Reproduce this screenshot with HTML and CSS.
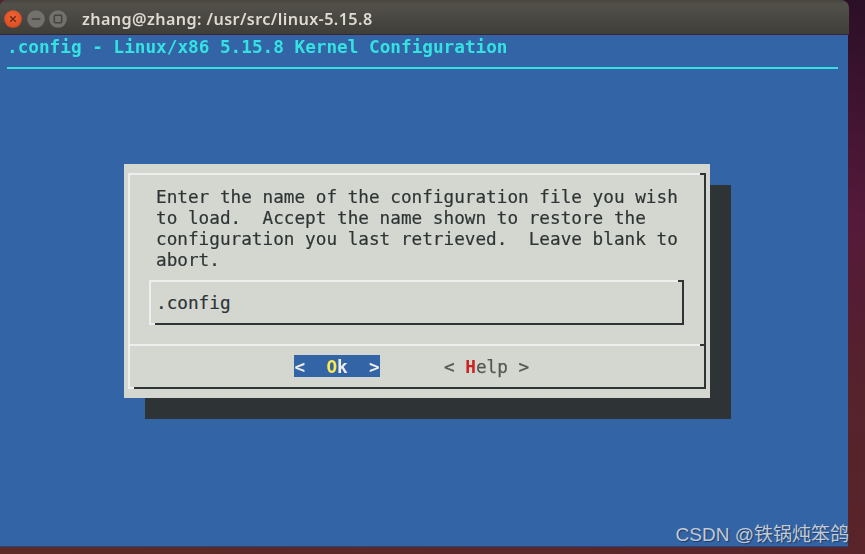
FILE: index.html
```html
<!DOCTYPE html>
<html lang="en">
<head>
<meta charset="utf-8">
<title>Kernel Configuration</title>
<link rel="stylesheet" href="styles.css">
</head>
<body>
<div class="desktop">
  <div class="window">
    <header class="titlebar">
      <div class="controls">
        <svg class="ctl" width="18" height="18" viewBox="0 0 18 18"><defs><radialGradient id="c" cx="50%" cy="40%" r="60%"><stop offset="0" stop-color="#f0693a"/><stop offset="1" stop-color="#dc4a1f"/></radialGradient></defs><circle cx="9" cy="9" r="8.8" fill="url(#c)"/><path d="M6.2 6.2l5.6 5.6M11.8 6.2l-5.6 5.6" stroke="#6e2a16" stroke-width="1.5" fill="none"/></svg>
        <svg class="ctl" width="18" height="18" viewBox="0 0 18 18"><circle cx="9" cy="9" r="8.8" fill="#72716b"/><path d="M4.8 9h8.4" stroke="#44433e" stroke-width="1.6" fill="none"/></svg>
        <svg class="ctl" width="18" height="18" viewBox="0 0 18 18"><circle cx="9" cy="9" r="8.8" fill="#72716b"/><rect x="5.3" y="5.3" width="7.4" height="7.4" rx="1" stroke="#44433e" stroke-width="1.5" fill="none"/></svg>
      </div>
      <h1 class="title">zhang@zhang: /usr/src/linux-5.15.8</h1>
    </header>
    <main class="terminal">
      <div class="heading">.config - Linux/x86 5.15.8 Kernel Configuration</div>
      <div class="rule"></div>
      <section class="dialog">
        <div class="frame">
          <p class="prompt">Enter the name of the configuration file you wish
to load.  Accept the name shown to restore the
configuration you last retrieved.  Leave blank to
abort.</p>
          <div class="input">.config</div>
          <div class="buttons">
            <span class="btn btn-active">&lt;  <b class="hot-yellow">O</b>k  &gt;</span>
            <span class="btn">&lt; <b class="hot-red">H</b>elp &gt;</span>
          </div>
        </div>
      </section>
    </main>
  </div>
  <div class="watermark">CSDN @铁锅炖笨鸽</div>
</div>
</body>
</html>
```
FILE: styles.css
```css
* { box-sizing: border-box; }
html, body { margin: 0; padding: 0; }
body { width: 865px; height: 554px; overflow: hidden; }

.desktop {
  position: relative;
  width: 865px;
  height: 554px;
  background: linear-gradient(20deg, #5e2a26 0%, #56222c 55%, #55193a 75%, #2a0f26 100%);
}

.window { width: 849px; height: 547px; display: flex; flex-direction: column; }

.titlebar {
  height: 35px;
  flex: none;
  display: flex;
  align-items: center;
  padding: 3px 0 0 4px;
  background: linear-gradient(#47453f 0, #53504a 12%, #3f3e39 100%);
  border-radius: 6px 8px 0 0;
  border-bottom: 1px solid #3a2438;
}
.controls { display: flex; gap: 4.5px; }
.ctl { display: block; }
.title {
  margin: 0 0 0 15px;
  font: 600 16.2px/20px "Noto Sans", sans-serif;
  letter-spacing: 0.4px;
  color: #dfdbd2;
  white-space: pre;
  filter: blur(0.3px);
}

.terminal {
  flex: 1;
  margin-right: 1px;
  padding: 2px 10px 0 7px;
  background: #3364a6;
  box-shadow: inset 0 -1px 0 #24467e;
  font-family: "DejaVu Sans Mono", monospace;
  font-size: 17.7px;
  line-height: 21.3px;
}
.heading {
  height: 21px;
  font-weight: 700;
  color: #34e2e2;
  white-space: pre;
  filter: blur(0.3px);
}
.rule { height: 2px; margin-top: 9px; background: #34e2e2; }

.dialog {
  width: 586px;
  height: 234px;
  margin: 95px 0 0 117px;
  padding: 9px 4px 9px 4px;
  background: #d3d7cf;
  box-shadow: 21px 21px 0 #2e3436;
}
.frame {
  position: relative;
  height: 216px;
  border-style: solid;
  border-width: 2px;
  border-color: #eeeeec #2e3436 #2e3436 #eeeeec;
  color: #2e3436;
}
.frame::before {
  content: "";
  position: absolute;
  top: -2px;
  right: -2px;
  width: 6px;
  height: 2px;
  background: #2e3436;
}
.frame::after {
  content: "";
  position: absolute;
  left: -2px;
  bottom: -2px;
  width: 6px;
  height: 2px;
  background: #eeeeec;
}
.prompt {
  margin: 0;
  padding: 11.5px 0 0 26px;
  height: 97px;
  white-space: pre;
  -webkit-text-stroke: 0.2px #2e3436;
  filter: blur(0.3px);
}
.input {
  position: relative;
  margin: 8px 20px 0 19px;
  height: 45px;
  padding: 11px 0 0 5px;
  border-style: solid;
  border-width: 2px;
  border-color: #eeeeec #2e3436 #2e3436 #eeeeec;
  white-space: pre;
  -webkit-text-stroke: 0.2px #2e3436;
}
.input::before {
  content: "";
  position: absolute;
  top: -2px;
  right: -2px;
  width: 6px;
  height: 2px;
  background: #2e3436;
}
.input::after {
  content: "";
  position: absolute;
  left: -2px;
  bottom: -2px;
  width: 6px;
  height: 2px;
  background: #eeeeec;
}
.buttons {
  position: relative;
  display: flex;
  gap: 64px;
  margin-top: 19px;
  height: 43px;
  padding: 9px 0 0 164px;
  border-top: 2px solid #eeeeec;
}
.buttons::after {
  content: "";
  position: absolute;
  top: -2px;
  right: 0;
  width: 4px;
  height: 2px;
  background: #2e3436;
}
.btn { display: block; height: 22px; padding-top: 2px; line-height: 20px; white-space: pre; color: #555753; -webkit-text-stroke: 0.25px #555753; filter: blur(0.3px); }
.btn b { font-weight: 700; -webkit-text-stroke: 0; }
.btn-active { width: 86px; padding-left: 0.5px; background: #3364a6; color: #eeeeec; font-weight: 700; -webkit-text-stroke: 0; }
.hot-yellow { color: #fce94f; }
.hot-red { color: #cc2222; }

.watermark {
  position: absolute;
  right: 16px;
  bottom: 8px;
  font: 400 19px/22px "Liberation Sans", "Noto Sans CJK SC", sans-serif;
  color: #c2cad6;
  text-shadow: 1px 1px 1px #1f3a63;
  white-space: pre;
}
```
